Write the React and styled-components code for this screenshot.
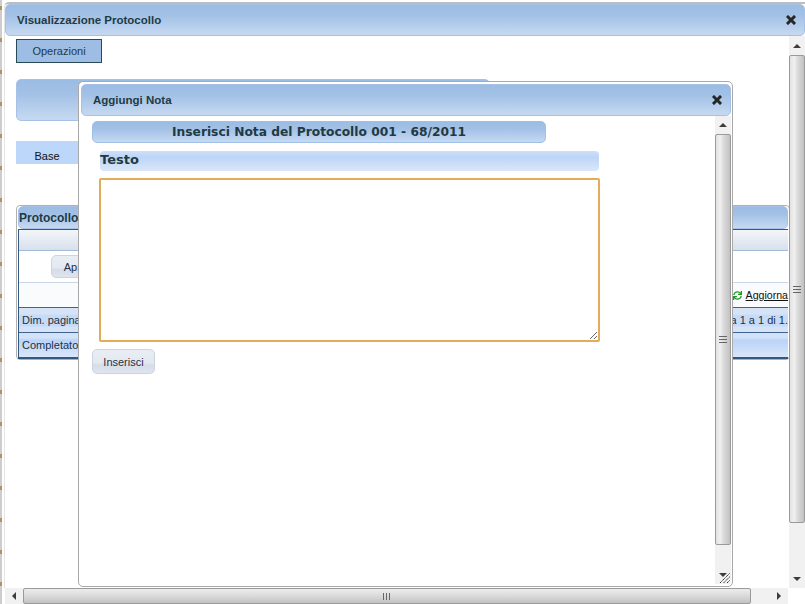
import React from "react";
import styled, { createGlobalStyle } from "styled-components";
import { FaSync } from "react-icons/fa";

const Global = createGlobalStyle`
  html, body { margin: 0; padding: 0; background: #fff; overflow: hidden; }
  * { box-sizing: border-box; }
`;

const sans = `"Liberation Sans", Arial, sans-serif`;
const wide = `"DejaVu Sans", Verdana, sans-serif`;
const barGradient = `linear-gradient(to bottom, #9bbce3 0%, #a3c1e6 35%, #c6d9f1 100%)`;

const Desk = styled.div`
  position: relative;
  width: 805px;
  height: 604px;
  overflow: hidden;
  padding: 2px 0 0 4px;
  background-color: #fff;
  background-image:
    repeating-linear-gradient(to bottom, transparent 0 6px, #ad9468 6px 10px, transparent 10px 32px),
    linear-gradient(#cdcdcd, #cdcdcd);
  background-size: 2px 100%, 2px 100%;
  background-repeat: no-repeat;
`;

const Window = styled.section`
  display: flex;
  flex-direction: column;
  height: 586px;
  border-top: 2px solid #bdbdbd;
  border-left: 1px solid #e4e4e4;
  border-radius: 5px 0 0 0;
  background: #fff;
`;

const Dialog = styled.section`
  position: absolute;
  left: 78px;
  top: 81px;
  width: 655px;
  height: 506px;
  display: flex;
  flex-direction: column;
  padding: 2px 1px 2px 2px;
  background: #fff;
  border: 1px solid #a9a9a9;
  border-radius: 5px;
`;

const TitleBar = styled.header`
  flex: none;
  height: 32px;
  display: flex;
  align-items: center;
  justify-content: space-between;
  padding: 0 ${(p) => p.$right}px 0 ${(p) => p.$left}px;
  background: ${barGradient};
  border: 1px solid #a5c1e6;
  border-radius: 5px;
  font: bold 11.5px ${sans};
  color: #1f3a44;
`;

const CloseIcon = () => (
  <svg width="10" height="10" viewBox="0 0 10 10" aria-hidden="true">
    <path d="M2 2 L8 8 M8 2 L2 8" stroke="#262626" strokeWidth="3" strokeLinecap="square" />
  </svg>
);

const BodyRow = styled.div`
  flex: 1;
  min-height: 0;
  display: flex;
`;

const Content = styled.div`
  flex: 1;
  min-width: 0;
  padding: ${(p) => p.$top}px 0 0 11px;
  overflow: hidden;
`;

const Operations = styled.button`
  display: block;
  width: 86px;
  height: 24px;
  padding: 0;
  background: #9dbde4;
  border: 1px solid #2b4a57;
  font: 11px ${sans};
  color: #1f3a44;
`;

const HiddenPanel = styled.div`
  width: 474px;
  height: 42px;
  margin-top: 16px;
  background: ${barGradient};
  border: 1px solid #a5c1e6;
  border-radius: 5px;
`;

const Tab = styled.div`
  width: 62px;
  height: 23px;
  margin-top: 20px;
  display: flex;
  align-items: center;
  justify-content: center;
  padding-top: 7px;
  background: #bcd7f9;
  font: 11px ${sans};
  color: #111;
`;

const Grid = styled.div`
  width: 774px;
  height: 155px;
  margin-top: 41px;
  padding: 0 1px;
  border: 1px solid #b0b0b0;
  border-radius: 4px;
  background: #fff;
`;

const GridTitle = styled.div`
  height: 23px;
  display: flex;
  align-items: center;
  background: ${barGradient};
  border: 1px solid #a5c1e6;
  border-radius: 5px;
  font: bold 12px ${sans};
  color: #1f3a44;
`;

const GridTable = styled.div`
  height: 130px;
  display: flex;
  flex-direction: column;
  border-style: solid;
  border-color: #34587f;
  border-width: 1px 0 2px 1px;
`;

const HeadRow = styled.div`
  flex: none;
  height: 21px;
  background: linear-gradient(to bottom, #f3f5f9, #d9e0ec);
  border-bottom: 1px solid #9fbbd8;
`;

const ToolRow = styled.div`
  flex: none;
  height: 32px;
  padding: 4px 0 0 32px;
  background: #fff;
  border-bottom: 1px solid #cad5e5;
`;

const Button = styled.button`
  display: block;
  width: ${(p) => p.$width}px;
  height: ${(p) => p.$height}px;
  padding: 0;
  border: 1px solid #ccd4e0;
  border-radius: 5px;
  background: linear-gradient(to bottom, #e9edf4 0%, #e4e9f1 55%, #d5dde9 65%, #dfe5ef 100%);
  font: 11px ${sans};
  color: #1f3044;
`;

const RefreshRow = styled.div`
  flex: none;
  height: 25px;
  display: flex;
  align-items: center;
  justify-content: flex-end;
  gap: 4px;
  background: #fafbfc;
  border-bottom: 1px solid #3f6490;
  font: 10.6px ${sans};
  color: #111;
`;

const RefreshLink = styled.a`
  color: #111;
  text-decoration: underline;
`;

const StatusRow = styled.div`
  flex: none;
  height: ${(p) => (p.$strong ? 24 : 25)}px;
  display: flex;
  align-items: center;
  justify-content: space-between;
  padding: 0 0 0 3px;
  background: ${(p) =>
    p.$strong
      ? "linear-gradient(to bottom, #d3e2f8 0%, #d3e2f8 20%, #bad4f8 30%, #d8e6f9 100%)"
      : "linear-gradient(to bottom, #d6e3f6 0%, #d6e3f6 25%, #c6dbf8 30%, #c6dbf8 75%, #d6e3f6 80%)"};
  border-bottom: ${(p) => (p.$strong ? 0 : "1px solid #3f6490")};
  font: 11px ${sans};
  color: #1f3044;
  white-space: nowrap;
`;

const Heading = styled.h2`
  width: 454px;
  height: 22px;
  margin: 0;
  display: flex;
  align-items: center;
  justify-content: center;
  background: ${barGradient};
  border: 1px solid #a0bfe6;
  border-radius: 5px;
  font: bold 12.25px ${wide};
  color: #1f3a44;
`;

const FieldLabel = styled.h3`
  width: 499px;
  height: 20px;
  margin: 8px 0 0 8px;
  padding: 0;
  border-radius: 4px;
  background: linear-gradient(to bottom, #cfe0f9 0%, #bcd5f7 30%, #dbe7f8 100%);
  font: bold 13px/18px ${wide};
  color: #1f3a44;
`;

const NoteArea = styled.textarea`
  display: block;
  width: 501px;
  height: 164px;
  margin: 7px 0 7px 7px;
  padding: 2px;
  border: 2px solid #e2ac58;
  border-radius: 2px;
  background: #fff;
  outline: none;
`;

const VScroll = styled.div`
  flex: none;
  width: 16px;
  display: flex;
  flex-direction: column;
  background: #f1f1f1;
`;

const HScroll = styled.div`
  width: 783px;
  height: 16px;
  margin-left: 1px;
  display: flex;
  background: #f1f1f1;
`;

const ArrowCell = styled.div`
  flex: none;
  width: ${(p) => p.$w}px;
  height: ${(p) => p.$h}px;
  display: flex;
  align-items: center;
  justify-content: center;
  color: #333;
`;

const VThumb = styled.div`
  flex: none;
  height: ${(p) => p.$h}px;
  display: flex;
  flex-direction: column;
  align-items: center;
  justify-content: center;
  gap: 2px;
  border: 1px solid #9a9a9a;
  border-radius: 2px;
  background: linear-gradient(to right, #e2e2e2 0%, #f0f0f0 30%, #dadada 55%, #c2c2c2 100%);
`;

const HThumb = styled.div`
  flex: none;
  width: ${(p) => p.$w}px;
  display: flex;
  align-items: center;
  justify-content: center;
  gap: 1px;
  border: 1px solid #9a9a9a;
  border-radius: 2px;
  background: linear-gradient(to bottom, #ececec 0%, #dcdcdc 45%, #c2c2c2 100%);
`;

const GripV = styled.i`
  display: block;
  width: 8px;
  height: 1px;
  background: #666;
`;

const GripH = styled.i`
  display: block;
  width: 1px;
  height: 7px;
  margin-right: 1px;
  background: #666;
`;

const Spacer = styled.div`
  flex: 1;
`;

const Triangle = ({ dir }) => {
  const pts = {
    up: "4,1 8,5 0,5",
    down: "0,1 8,1 4,5",
    left: "5,0 5,8 1,4",
    right: "1,0 1,8 5,4",
  }[dir];
  const vertical = dir === "up" || dir === "down";
  return (
    <svg width={vertical ? 8 : 6} height={vertical ? 6 : 8} aria-hidden="true">
      <polygon points={pts} fill="#3c3c3c" />
    </svg>
  );
};

const Resizer = styled.svg`
  position: absolute;
  right: 1px;
  bottom: 2px;
  width: 12px;
  height: 12px;
`;

export default function App() {
  return (
    <>
      <Global />
      <Desk>
        <Window>
          <TitleBar $left={11} $right={8}>
            <span>Visualizzazione Protocollo</span>
            <CloseIcon />
          </TitleBar>
          <BodyRow>
            <Content $top={3}>
              <Operations>Operazioni</Operations>
              <HiddenPanel />
              <Tab>Base</Tab>
              <Grid>
                <GridTitle>Protocollo_</GridTitle>
                <GridTable>
                  <HeadRow />
                  <ToolRow>
                    <Button $width={45} $height={23}>Apri</Button>
                  </ToolRow>
                  <RefreshRow>
                    <FaSync size={9} color="#149a1e" />
                    <RefreshLink>Aggiorna</RefreshLink>
                  </RefreshRow>
                  <StatusRow>
                    <span>Dim. pagina</span>
                    <span>a 1 a 1 di 1.</span>
                  </StatusRow>
                  <StatusRow $strong>
                    <span>Completato</span>
                  </StatusRow>
                </GridTable>
              </Grid>
            </Content>
            <VScroll>
              <ArrowCell $w={16} $h={19}><Triangle dir="up" /></ArrowCell>
              <VThumb $h={468}>
                <GripV /><GripV /><GripV />
              </VThumb>
              <Spacer />
              <ArrowCell $w={16} $h={19}><Triangle dir="down" /></ArrowCell>
            </VScroll>
          </BodyRow>
        </Window>
        <HScroll>
          <ArrowCell $w={18} $h={16}><Triangle dir="left" /></ArrowCell>
          <HThumb $w={728}>
            <GripH /><GripH /><GripH />
          </HThumb>
          <Spacer />
          <ArrowCell $w={18} $h={16}><Triangle dir="right" /></ArrowCell>
        </HScroll>
        <Dialog>
          <TitleBar $left={11} $right={8}>
            <span>Aggiungi Nota</span>
            <CloseIcon />
          </TitleBar>
          <BodyRow>
            <Content $top={5}>
              <Heading>Inserisci Nota del Protocollo 001 - 68/2011</Heading>
              <FieldLabel>Testo</FieldLabel>
              <NoteArea />
              <Button $width={63} $height={25}>Inserisci</Button>
            </Content>
            <VScroll>
              <ArrowCell $w={16} $h={18}><Triangle dir="up" /></ArrowCell>
              <VThumb $h={411}>
                <GripV /><GripV /><GripV />
              </VThumb>
              <Spacer />
              <ArrowCell $w={16} $h={19}><Triangle dir="down" /></ArrowCell>
            </VScroll>
          </BodyRow>
          <Resizer viewBox="0 0 12 12" aria-hidden="true">
            <path d="M1 11 L11 1 M4.5 11 L11 4.5 M8 11 L11 8" stroke="#333" strokeWidth="1" strokeDasharray="1.5 0.5" fill="none" />
          </Resizer>
        </Dialog>
      </Desk>
    </>
  );
}
